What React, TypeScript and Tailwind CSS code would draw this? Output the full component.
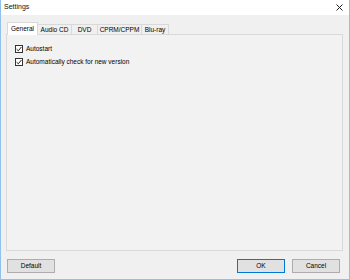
import React from 'react';

const tabs = ['General', 'Audio CD', 'DVD', 'CPRM/CPPM', 'Blu-ray'];
const tabWidths = ['w-[31px]', 'w-[34px]', 'w-[26px]', 'w-[44px]', 'w-[27px]'];

function Check({ label }: { label: string }) {
  return (
    <div className="flex items-center gap-[3px] h-[9px]">
      <div className="w-[8px] h-[8px] border border-[#333] bg-white flex items-center justify-center">
        <svg width="6" height="6" viewBox="0 0 6 6">
          <path d="M0.6 3.2 L2.3 4.8 L5.4 1" fill="none" stroke="#222" strokeWidth="1" />
        </svg>
      </div>
      <span>{label}</span>
    </div>
  );
}

function Button({ label, primary }: { label: string; primary?: boolean }) {
  return (
    <div
      className={`h-[14px] flex items-center justify-center bg-[#e1e1e1] border ${
        primary ? 'border-[#0078d7] w-[48px]' : 'border-[#adadad] w-[48px]'
      }`}
    >
      {label}
    </div>
  );
}

export default function App() {
  return (
    <div
      className="w-[350px] h-[280px] bg-[#f0f0f0] border-x border-b border-[#8fc1ec] flex flex-col text-[6.5px] text-black"
      style={{ fontFamily: '"Liberation Sans", Arial, sans-serif' }}
    >
      {/* Title bar */}
      <div className="h-[15px] bg-white flex items-center justify-between pl-[3px] pr-[6px] shrink-0">
        <span className="text-[7px] text-[#111]">Settings</span>
        <svg width="7" height="7" viewBox="0 0 7 7">
          <path d="M0.5 0.5 L6.5 6.5 M6.5 0.5 L0.5 6.5" stroke="#222" strokeWidth="1" />
        </svg>
      </div>

      <div className="flex-1 flex flex-col pl-[5px] pr-[6px] pt-[7px] pb-[6px]">
        {/* Tabs */}
        <div className="flex items-end h-[12px] pl-[1px] relative z-10">
          {tabs.map((t, i) =>
            i === 0 ? (
              <div
                key={t}
                className={`${tabWidths[i]} h-[13px] bg-white border border-b-0 border-[#d9d9d9] flex items-center justify-center -mb-[1px]`}
              >
                {t}
              </div>
            ) : (
              <div
                key={t}
                className={`${tabWidths[i]} h-[10px] bg-[#f0f0f0] border border-l-0 border-b-0 border-[#d9d9d9] flex items-center justify-center`}
              >
                {t}
              </div>
            )
          )}
        </div>

        {/* Panel */}
        <div className="flex-1 border border-[#d9d9d9] bg-[#f2f2f2] pl-[8px] pt-[9px] flex flex-col gap-[4px]">
          <Check label="Autostart" />
          <Check label="Automatically check for new version" />
        </div>

        {/* Buttons */}
        <div className="flex items-center justify-between mt-[8px] pl-[1px] pr-[3px]">
          <Button label="Default" />
          <div className="flex gap-[7px]">
            <Button label="OK" primary />
            <Button label="Cancel" />
          </div>
        </div>
      </div>
    </div>
  );
}
